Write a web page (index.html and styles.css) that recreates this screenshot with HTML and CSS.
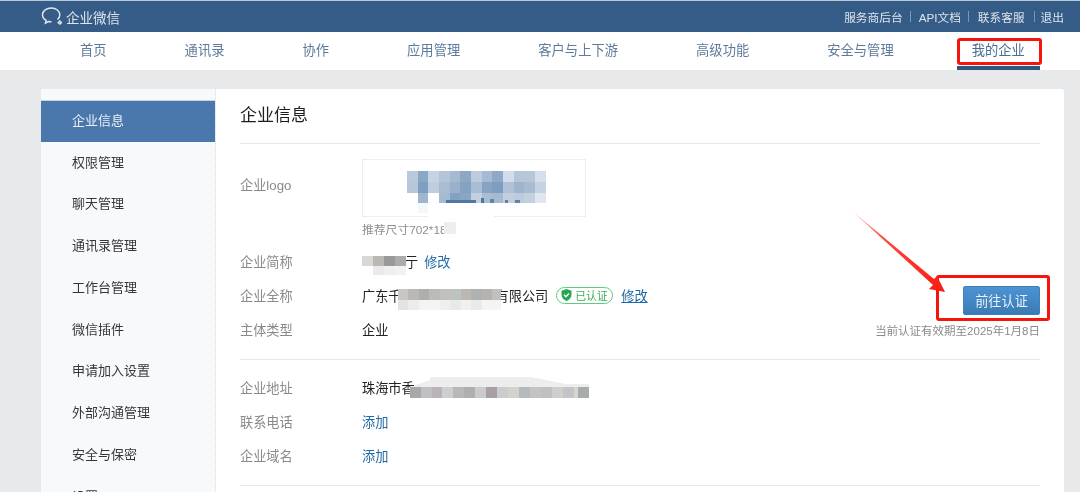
FILE: index.html
```html
<!DOCTYPE html>
<html lang="zh-CN">
<head>
<meta charset="utf-8">
<title>企业微信 - 我的企业</title>
<link rel="stylesheet" href="styles.css">
</head>
<body>
<header class="topbar">
  <div class="brand">
    <svg class="brand-icon" width="22" height="20" viewBox="0 0 22 20" fill="none" stroke="#dfe6ef" stroke-width="1.500">
      <path d="M16.500 12.500c1.500-1.300 2.300-3 2.300-4.800C18.800 4 15.100 1 10.400 1S1.500 4 1.500 7.700c0 2.300 1.400 4.300 3.500 5.500l-.5 3 3.300-1.800c.9.200 1.800.3 2.700.3"/>
      <path d="M21 15.500c-1.300.2-2 .9-2.200 2.200-.2-1.300-.9-2-2.200-2.200 1.300-.2 2-.9 2.200-2.200.2 1.300.9 2 2.200 2.200z" stroke-width="1.300"/>
    </svg>
    <span>企业微信</span>
  </div>
  <nav class="toplinks">
    <a>服务商后台</a><i></i><a>API文档</a><i></i><a>联系客服</a><i class="wide"></i><a>退出</a>
  </nav>
</header>
<nav class="mainnav">
  <a>首页</a><a>通讯录</a><a>协作</a><a>应用管理</a><a>客户与上下游</a><a>高级功能</a><a>安全与管理</a><a class="active">我的企业</a>
</nav>
<main class="page">
  <div class="card">
    <aside class="sidebar">
      <a class="current">企业信息</a>
      <a>权限管理</a>
      <a>聊天管理</a>
      <a>通讯录管理</a>
      <a>工作台管理</a>
      <a>微信插件</a>
      <a>申请加入设置</a>
      <a>外部沟通管理</a>
      <a>安全与保密</a>
      <a>设置</a>
    </aside>
    <section class="content">
      <h1 class="title">企业信息</h1>
      <div class="block block-top">
        <div class="rows">
          <div class="logo-row">
            <span class="label label-logo">企业logo</span>
            <div>
              <div class="logo-box">
                <svg class="logo-mosaic" width="224" height="58" viewBox="0 0 224 58" shape-rendering="crispEdges">
                  <rect x="45" y="12" width="11" height="11" fill="#b9c9dc"/><rect x="56" y="12" width="10" height="11" fill="#8ba7c6"/><rect x="66" y="12" width="11" height="11" fill="#c6d3e2"/><rect x="77" y="12" width="11" height="11" fill="#b4c5d9"/><rect x="88" y="12" width="10" height="11" fill="#a5b9d1"/><rect x="98" y="12" width="11" height="11" fill="#8ca8c5"/><rect x="109" y="12" width="11" height="11" fill="#bccbdd"/><rect x="120" y="12" width="10" height="11" fill="#a6bbd3"/><rect x="130" y="12" width="11" height="11" fill="#8ea9c7"/><rect x="141" y="12" width="11" height="11" fill="#d3dde9"/><rect x="152" y="12" width="10" height="11" fill="#b5c6da"/><rect x="162" y="12" width="11" height="11" fill="#b7c7da"/><rect x="173" y="12" width="11" height="11" fill="#d5deea"/>
                  <rect x="45" y="23" width="11" height="11" fill="#b6c7db"/><rect x="56" y="23" width="10" height="11" fill="#7f9fc1"/><rect x="66" y="23" width="11" height="11" fill="#bfcede"/><rect x="77" y="23" width="11" height="11" fill="#a9bcd2"/><rect x="88" y="23" width="10" height="11" fill="#9ab0cb"/><rect x="98" y="23" width="11" height="11" fill="#84a2c2"/><rect x="109" y="23" width="11" height="11" fill="#a9bdd3"/><rect x="120" y="23" width="10" height="11" fill="#86a3c4"/><rect x="130" y="23" width="11" height="11" fill="#7e9ebf"/><rect x="141" y="23" width="11" height="11" fill="#b0c2d7"/><rect x="152" y="23" width="10" height="11" fill="#9fb5ce"/><rect x="162" y="23" width="11" height="11" fill="#a8bbd2"/><rect x="173" y="23" width="11" height="11" fill="#c6d2e2"/>
                  <rect x="56" y="34" width="10" height="10" fill="#a0b6cf"/><rect x="77" y="34" width="11" height="10" fill="#a5b9d1"/><rect x="88" y="34" width="10" height="10" fill="#83a1c1"/><rect x="98" y="34" width="11" height="10" fill="#8aa6c5"/><rect x="109" y="34" width="11" height="10" fill="#c3d0e0"/><rect x="120" y="34" width="10" height="10" fill="#a9bdd3"/><rect x="130" y="34" width="11" height="10" fill="#a5b9d1"/><rect x="141" y="34" width="11" height="10" fill="#c0cede"/><rect x="152" y="34" width="10" height="10" fill="#bccbdd"/><rect x="162" y="34" width="11" height="10" fill="#c3d0e0"/><rect x="173" y="34" width="11" height="10" fill="#e0e6ef"/>
                  <rect x="84" y="41" width="30" height="3" fill="#4f77a3"/><rect x="119" y="39" width="3" height="5" fill="#4f77a3"/><rect x="128" y="40" width="4" height="4" fill="#5f83ab"/><rect x="143" y="41" width="3" height="3" fill="#5f83ab"/><rect x="153" y="41" width="5" height="3" fill="#5f83ab"/>
                  <rect x="56" y="44" width="10" height="10" fill="#f5f7fa"/><rect x="66" y="52" width="66" height="8" fill="#fff"/>
                </svg>
              </div>
              <div class="hint">推荐尺寸702*18<svg class="mosaic hint-mosaic" width="12" height="12" shape-rendering="crispEdges"><rect width="12" height="12" fill="#eeeeef"/></svg></div>
            </div>
          </div>
          <div class="row">
            <span class="label">企业简称</span>
            <span class="value">
              <svg class="mosaic mosaic-short" width="44" height="19" shape-rendering="crispEdges"><rect y="0" width="11" height="10" fill="#d9d8d8"/><rect x="11" y="0" width="11" height="10" fill="#bbb8b3"/><rect x="22" y="0" width="11" height="10" fill="#9a989b"/><rect x="33" y="0" width="11" height="10" fill="#adabae"/><rect x="11" y="10" width="11" height="9" fill="#eaeaea"/><rect x="22" y="10" width="11" height="9" fill="#efefef"/><rect x="33" y="10" width="11" height="9" fill="#f2f2f2"/></svg><span class="clip-char">亍</span>
              <a class="link edit">修改</a>
            </span>
          </div>
          <div class="row">
            <span class="label">企业全称</span>
            <span class="value">
              <span>广东千</span>
              <svg class="mosaic mosaic-full" width="103" height="21" shape-rendering="crispEdges"><rect width="10" height="11" fill="#c7c6c5"/><rect x="10" width="11" height="11" fill="#b9b8b6"/><rect x="21" width="10" height="11" fill="#aeaeac"/><rect x="31" width="11" height="11" fill="#bdbbb8"/><rect x="42" width="10" height="11" fill="#c0c0bc"/><rect x="52" width="11" height="11" fill="#bcc4be"/><rect x="63" width="10" height="11" fill="#b9b8b2"/><rect x="73" width="11" height="11" fill="#aeb3b2"/><rect x="84" width="10" height="11" fill="#b6b3af"/><rect x="94" width="9" height="11" fill="#c2c0bd"/><rect y="11" width="10" height="10" fill="#e4e3e3"/><rect x="10" y="11" width="11" height="10" fill="#ececec"/><rect x="21" y="11" width="10" height="10" fill="#f2f3f3"/><rect x="31" y="11" width="11" height="10" fill="#f3f4f3"/><rect x="42" y="11" width="10" height="10" fill="#eeefee"/><rect x="52" y="11" width="11" height="10" fill="#e8e9e8"/><rect x="63" y="11" width="10" height="10" fill="#f0f0ef"/><rect x="73" y="11" width="11" height="10" fill="#eaeaea"/><rect x="84" y="11" width="19" height="10" fill="#f4f4f4"/></svg>
              <span>有限公司</span>
              <span class="badge">
                <svg width="11" height="12" viewBox="0 0 11 12"><path d="M5.500 0l5 1.800v4c0 3-2.200 5-5 6.200-2.800-1.200-5-3.200-5-6.200v-4z" fill="#27a84f"/><path d="M3 5.800l1.900 1.900L8 4.500" fill="none" stroke="#fff" stroke-width="1.300"/></svg>
                已认证
              </span>
              <a class="link underlined">修改</a>
            </span>
          </div>
          <div class="row">
            <span class="label">主体类型</span>
            <span class="value">企业</span>
          </div>
        </div>
        <div class="certify">
          <button class="btn">前往认证</button>
          <p class="expiry">当前认证有效期至2025年1月8日</p>
        </div>
      </div>
      <div class="block block-bottom">
        <div class="row">
          <span class="label">企业地址</span>
          <span class="value">
            <span>珠海市香</span>
            <svg class="mosaic mosaic-addr" width="179" height="21" shape-rendering="crispEdges"><path d="M0 10L20 3V0H120L155 7H179V10z" fill="#ededee"/><rect x="0" y="10" width="11" height="11" fill="#a8a7aa"/><rect x="11" y="10" width="11" height="11" fill="#c0bfc1"/><rect x="22" y="10" width="10" height="11" fill="#bab3b7"/><rect x="32" y="10" width="11" height="11" fill="#cbcfd0"/><rect x="43" y="10" width="11" height="11" fill="#b7b8b7"/><rect x="54" y="10" width="11" height="11" fill="#aeafae"/><rect x="65" y="10" width="11" height="11" fill="#c9cbcd"/><rect x="76" y="10" width="11" height="11" fill="#a99fa4"/><rect x="87" y="10" width="11" height="11" fill="#cacccf"/><rect x="98" y="10" width="11" height="11" fill="#d2d2ce"/><rect x="109" y="10" width="11" height="11" fill="#b5babd"/><rect x="120" y="10" width="11" height="11" fill="#c4c2c2"/><rect x="131" y="10" width="11" height="11" fill="#c0c0c0"/><rect x="142" y="10" width="11" height="11" fill="#d0cecc"/><rect x="153" y="10" width="11" height="11" fill="#c3c3c8"/><rect x="164" y="10" width="4" height="11" fill="#d6d5cf"/><rect x="168" y="10" width="11" height="11" fill="#a8abae"/></svg>
          </span>
        </div>
        <div class="row">
          <span class="label">联系电话</span>
          <a class="link">添加</a>
        </div>
        <div class="row">
          <span class="label">企业域名</span>
          <a class="link">添加</a>
        </div>
      </div>
    </section>
  </div>
</main>
<div class="mark mark-btn"></div>
<svg class="arrow" width="100" height="90" viewBox="0 0 100 90">
  <defs>
    <linearGradient id="arrowFill" x1="0" y1="0" x2="1" y2="1">
      <stop offset="0" stop-color="#ffd6d2"/>
      <stop offset=".3" stop-color="#ff4a40"/>
      <stop offset="1" stop-color="#fb1a10"/>
    </linearGradient>
  </defs>
  <path d="M2 1L84 69L87 66L95 82L79 79L83 75Z" fill="url(#arrowFill)"/>
</svg>
</body>
</html>
```
FILE: styles.css
```css
*, *::before, *::after { box-sizing: border-box; }
html, body { margin: 0; height: 492px; overflow: hidden; }
body {
  position: relative;
  background: #e8e9eb;
  font-family: "Liberation Sans", "Noto Sans CJK SC", sans-serif;
  font-size: 13px;
  color: #222;
  filter: blur(.35px);
}
a { text-decoration: none; }

.topbar {
  height: 32px;
  display: flex;
  align-items: center;
  justify-content: space-between;
  padding: 0 16px 0 41px;
  background: #355b87;
  border-top: 1px solid #b9c6d6;
  color: #dde4ed;
}
.brand { display: flex; align-items: center; gap: 3px; font-size: 13.500px; }
.brand-icon { display: block; margin-top: 1px; }
.toplinks { display: flex; align-items: center; font-size: 11.700px; }
.toplinks i { width: 1px; height: 11px; margin: 0 9px 0 7px; background: #7e97b5; }
.toplinks i:first-of-type { margin: 0 8px 0 7px; }
.toplinks i.wide { margin: 0 6px 0 9px; }

.mainnav {
  height: 38px;
  display: flex;
  align-items: center;
  gap: 78px;
  padding: 0 0 0 80px;
  background: #fff;
  font-size: 13.300px;
  line-height: 18px;
  color: #5f7b9b;
}
.mainnav .active { position: relative; color: #4d6d92; }
.mainnav .active::before {
  content: "";
  position: absolute;
  left: -15px;
  right: -17px;
  top: -4px;
  height: 27px;
  border: 3px solid #f5150c;
  border-radius: 3px;
}
.mainnav .active::after {
  content: "";
  position: absolute;
  left: -15px;
  right: -15px;
  top: 24px;
  height: 4px;
  background: #2f5583;
}

.page { padding: 19px 16px 0 41px; }
.card {
  display: flex;
  height: 403px;
  overflow: hidden;
  background: #fff;
  border-radius: 3px 3px 0 0;
}

.sidebar {
  width: 175px;
  flex: none;
  padding-top: 11px;
  background: #f8f9fb;
  border-right: 1px dotted #d9dde3;
  color: #363636;
}
.sidebar a { display: flex; align-items: center; height: 41.750px; padding: 0 0 3px 31px; }
.sidebar a.current { background: #4a78ac; color: #e9eff6; border-top: 1px solid #c4d2e2; }

.content { flex: 1; padding: 0 24px 0 24px; font-size: 13.200px; }
.title {
  height: 55px;
  margin: 0;
  padding-top: 15px;
  font-size: 17px;
  line-height: 24px;
  font-weight: 400;
  color: #1d1d1d;
  border-bottom: 1px solid #e8e8e8;
}
.block { border-bottom: 1px solid #e8e8e8; }
.block-top { display: flex; padding: 15px 0 12px; }
.block-bottom { padding: 11px 0 12px; }
.rows { flex: 1; }
.row { display: flex; align-items: center; height: 34px; padding-bottom: 2px; }
.logo-row { display: flex; align-items: flex-start; height: 86px; }
.label { width: 122px; flex: none; color: #8a8a8a; }
.label-logo { line-height: 34px; margin-top: 9px; padding-top: 1px; }
.value { display: flex; align-items: center; white-space: nowrap; }
.link { color: #2069a6; }
.underlined { margin-left: 8px; text-decoration: underline; }
.edit { margin-left: 6px; }

.logo-box { position: relative; width: 224px; height: 58px; border: 1px solid #eeeeee; }
.logo-mosaic { position: absolute; left: -1px; top: -1px; }
.hint { display: flex; align-items: center; height: 22px; font-size: 11.800px; color: #8f8f8f; }
.hint-mosaic { margin-left: -3px; }

.mosaic { display: block; flex: none; position: relative; }
.mosaic-short { margin-top: 9px; }
.clip-char { margin-left: -1px; }
.mosaic-full { margin: 8px -5px 0 -4px; }
.mosaic-addr { margin: 0 0 0 -5px; }

.badge {
  display: flex;
  align-items: center;
  gap: 3px;
  width: 57px;
  height: 17px;
  margin-left: 8px;
  padding: 0 0 0 4px;
  border: 1.500px solid #62c981;
  border-radius: 9px;
  font-size: 10.800px;
  color: #38b059;
}

.certify {
  display: flex;
  flex-direction: column;
  align-items: flex-end;
  justify-content: flex-end;
  padding-bottom: 8px;
}
.btn {
  width: 77px;
  height: 29px;
  padding: 0;
  border: 1px solid #3f7fba;
  border-radius: 2px;
  background: linear-gradient(#4d93d2, #3a7bb6);
  color: #e9f1f9;
  font: inherit;
}
.expiry { margin: 8px 0 0; height: 16px; line-height: 16px; font-size: 11.500px; color: #8a8a8a; white-space: nowrap; }

.mark-btn {
  position: absolute;
  left: 936px;
  top: 275px;
  width: 114px;
  height: 46px;
  border: 3px solid #f5150c;
  border-radius: 3px;
}
.arrow { position: absolute; left: 850px; top: 210px; }
```
